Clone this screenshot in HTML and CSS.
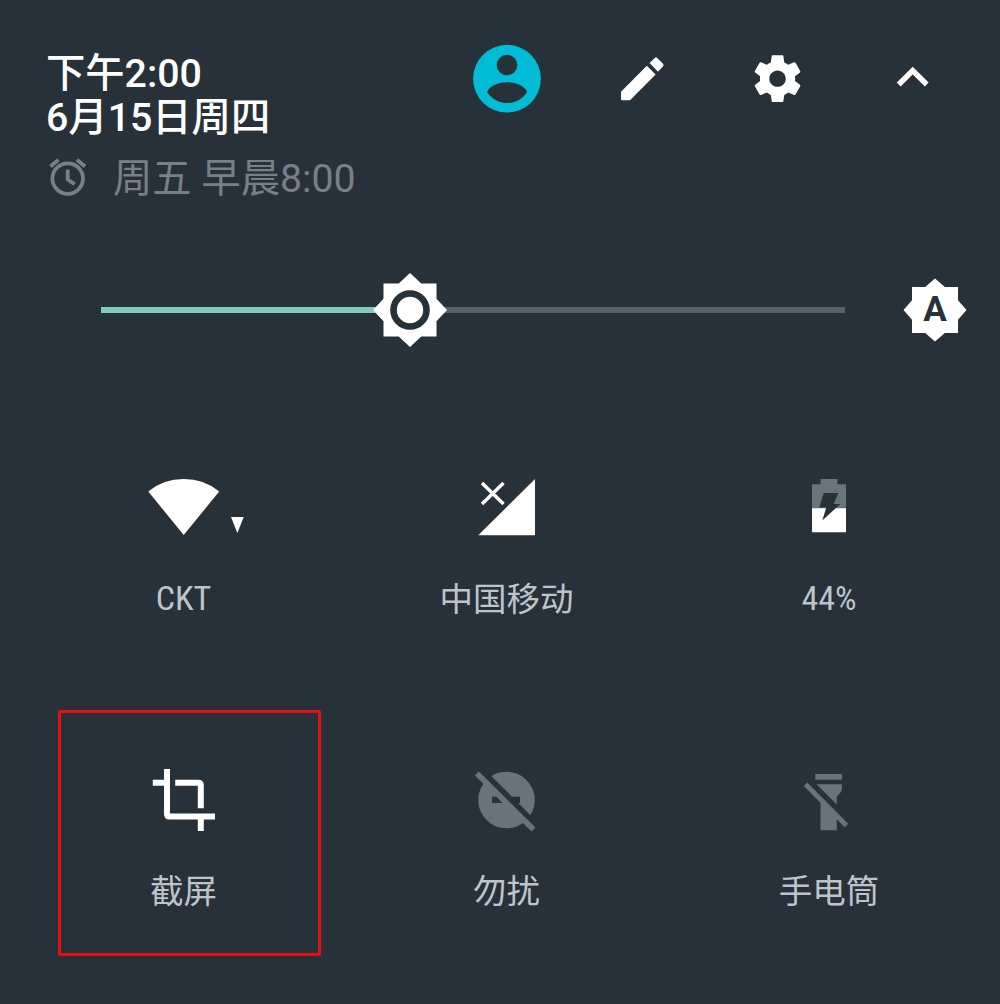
FILE: index.html
```html
<!DOCTYPE html>
<html lang="zh-CN">
<head>
<meta charset="utf-8">
<title>快捷设置</title>
<link rel="stylesheet" href="styles.css">
</head>
<body>
<main class="panel">
  <header class="header">
    <div class="clock">
      <div class="time">下午2:00</div>
      <div class="date">6月15日周四</div>
      <div class="alarm">
        <svg class="alarm-icon" width="44" height="44" viewBox="45 155 44 44">
          <circle cx="67.7" cy="178.6" r="15.3" fill="none" stroke="currentColor" stroke-width="3.8"/>
          <path d="M67.7 169.5V179.5L74.8 184.3M50.5 166.500L58.500 159.800M77 159.800L85 166.500" fill="none" stroke="currentColor" stroke-width="3.8"/>
        </svg>
        <span class="alarm-text">周五 早晨8:00</span>
      </div>
    </div>
    <nav class="actions">
      <svg width="136" height="80" viewBox="439 39 136 80">
        <circle cx="507" cy="78.7" r="33.9" fill="#00bcd4"/>
        <circle cx="507" cy="65" r="10.3" fill="#263238"/>
        <path d="M487 91.7C493.500 79 520.500 79 527.200 91.700C518 106.800 496.500 106.800 487 91.700Z" fill="#263238"/>
      </svg>
      <svg width="135" height="80" viewBox="575 39 135 80">
        <path d="M621 91.700L646.800 65.800L655.600 74.600L630 100.200H622.200Q621 100.200 621 99Z"/>
        <path d="M649.500 63L654.800 57.900Q656 56.800 657.200 57.900L663 63.800Q664 65 663 66.200L658 71.800Z"/>
      </svg>
      <svg width="135" height="80" viewBox="710 39 135 80">
        <path transform="translate(749.400 50.500) scale(2.345)" d="M19.430 12.980c.04-.32.070-.640.070-.980s-.030-.660-.070-.980l2.110-1.650c.190-.150.240-.420.120-.640l-2-3.460c-.120-.220-.390-.300-.610-.220l-2.490 1c-.520-.400-1.080-.730-1.690-.980l-.380-2.650C14.460 2.180 14.250 2 14 2h-4c-.250 0-.460.180-.490.420l-.380 2.650c-.610.250-1.170.590-1.690.980l-2.490-1c-.230-.090-.490 0-.610.220l-2 3.460c-.130.220-.070.490.120.640l2.110 1.650c-.040.320-.070.650-.070.980s.030.660.070.980l-2.110 1.650c-.190.150-.240.420-.120.640l2 3.460c.120.220.390.300.610.220l2.490-1c.520.400 1.080.730 1.690.980l.380 2.650c.030.240.240.420.490.420h4c.250 0 .460-.180.490-.420l.380-2.650c.610-.250 1.170-.590 1.690-.980l2.490 1c.230.090.490 0 .610-.220l2-3.460c.120-.220.070-.490-.120-.640l-2.110-1.650zM12 15.500c-1.930 0-3.500-1.570-3.500-3.500s1.570-3.500 3.500-3.500 3.500 1.570 3.500 3.500-1.570 3.500-3.500 3.500z"/>
      </svg>
      <svg width="135" height="80" viewBox="845 39 135 80">
        <path d="M898.700 84.500L912.700 70.500L926.700 84.500" fill="none" stroke="currentColor" stroke-width="5.400"/>
      </svg>
    </nav>
  </header>

  <section class="brightness">
    <div class="slider">
      <div class="track"><div class="level"></div></div>
      <svg class="thumb" width="76" height="76" viewBox="-38 -38 76 76">
        <path d="M0-37L11.300-26.500H26.500V-11.300L37 0L26.500 11.300V26.500H11.300L0 37L-11.300 26.500H-26.500V11.300L-37 0L-26.500-11.300V-26.500H-11.300Z"/>
        <circle r="16.500" fill="none" stroke="#263238" stroke-width="6.600"/>
      </svg>
    </div>
    <div class="auto">
      <svg width="66" height="66" viewBox="-33 -33 66 66">
        <path d="M0-31.500L9.800-23H23V-9.800L31.500 0L23 9.800V23H9.800L0 31.500L-9.800 23H-23V9.800L-31.500 0L-23-9.800V-23H-9.800Z"/>
        <text class="auto-letter" x="0" y="11" text-anchor="middle">A</text>
      </svg>
    </div>
  </section>

  <section class="tiles">
    <div class="tile">
      <svg width="160" height="80" viewBox="104 467 160 80">
        <path d="M148.300 491.500Q163 479 183.700 479T219.200 491.500L183.700 535Z"/>
        <path d="M231 517H243.700L237.400 533Z"/>
      </svg>
      <div class="label condensed">CKT</div>
    </div>
    <div class="tile">
      <svg width="160" height="80" viewBox="427 467 160 80">
        <path d="M535 479V535.200H478.300Z"/>
        <path d="M482 483L503.500 504M503.500 483L482 504" fill="none" stroke="currentColor" stroke-width="3.400"/>
      </svg>
      <div class="label">中国移动</div>
    </div>
    <div class="tile">
      <svg width="160" height="80" viewBox="749 467 160 80">
        <path d="M812 509V484.300H820.500V479H837.500V484.300H846V509Z" fill="#69757a"/>
        <path d="M812 508.300H846V532.300H812Z"/>
        <path d="M823.700 493H838.300L833.700 504H840.300L822.300 520.500L826.300 507.500H819.300Z" fill="#263238"/>
      </svg>
      <div class="label condensed">44%</div>
    </div>
    <div class="tile">
      <div class="highlight"></div>
      <svg width="160" height="80" viewBox="104 759 160 80">
        <path d="M152.800 782.800H167M167 769V814Q167 816.500 169.500 816.500H215M175.200 782.800H198.300Q200.800 782.800 200.800 785.300V808.300M200.800 816V831" fill="none" stroke="currentColor" stroke-width="6"/>
      </svg>
      <div class="label">截屏</div>
    </div>
    <div class="tile">
      <svg class="off" width="160" height="80" viewBox="427 759 160 80">
        <circle cx="506.500" cy="800" r="28.300"/>
        <path d="M492 796.700H520V803H492Z" fill="#263238"/>
        <path d="M480.500 769.500L538 827" stroke="#27313a" stroke-width="6"/>
        <path d="M476.800 773.500L533.500 829.500" stroke="currentColor" stroke-width="5.600"/>
      </svg>
      <div class="label">勿扰</div>
    </div>
    <div class="tile">
      <svg class="off" width="160" height="80" viewBox="749 759 160 80">
        <path d="M815.300 774H842V779.700H815.300Z"/>
        <path d="M816.500 784.300H842V788Q842 792 836.800 796.500V804.500Z"/>
        <path d="M820.500 799L836.800 815V830.300H820.500Z"/>
        <path d="M805.500 784.300L846.500 825.500" stroke="currentColor" stroke-width="5"/>
      </svg>
      <div class="label">手电筒</div>
    </div>
  </section>
</main>
</body>
</html>
```
FILE: styles.css
```css
* { box-sizing: border-box; }
body {
  margin: 0;
  background: #27313a;
  color: #fff;
  font-family: Roboto, "Noto Sans CJK SC", sans-serif;
}
svg { display: block; flex: none; fill: currentColor; }
.panel { width: 1000px; height: 1004px; overflow: hidden; }
.header {
  display: flex;
  height: 260px;
  padding: 39px 20px 0 46px;
}
.clock {
  width: 393px;
  padding-top: 14px;
  font-size: 39.3px;
  font-weight: 500;
  line-height: 43.5px;
  white-space: nowrap;
}
.alarm {
  display: flex;
  align-items: center;
  gap: 24px;
  height: 44px;
  margin: 15px 0 0 -1px;
  color: #778087;
  font-weight: 400;
}
.alarm-text { padding-top: 6px; }
.actions { display: flex; }
.brightness {
  display: flex;
  align-items: center;
  height: 100px;
  padding: 0 32px 0 101px;
  justify-content: space-between;
}
.slider {
  display: grid;
  align-items: center;
  width: 744px;
}
.track, .thumb { grid-area: 1 / 1; }
.track { height: 6px; background: #586068; }
.level { width: 308px; height: 6px; background: #80cbc0; }
.thumb { margin-left: 271px; }
.auto-letter { font-size: 35px; font-weight: 700; fill: #263238; }
.tiles {
  display: grid;
  grid-template-columns: 323px 323px 322px;
  grid-auto-rows: 292px;
  margin: 59px 0 0 22px;
}
.tile {
  position: relative;
  display: flex;
  flex-direction: column;
  align-items: center;
  gap: 31px;
  padding-top: 48px;
}
.label {
  color: #bec5c9;
  font-size: 33.5px;
  line-height: 44px;
  white-space: nowrap;
}
.condensed {
  font-family: "Roboto Condensed", Roboto, sans-serif;
  font-size: 34px;
  line-height: 41px;
}
.off { color: #69737a; }
.highlight {
  position: absolute;
  top: -1px;
  left: 36px;
  width: 263px;
  height: 246px;
  border: 3px solid #e60f12;
  border-radius: 2px;
}
```
